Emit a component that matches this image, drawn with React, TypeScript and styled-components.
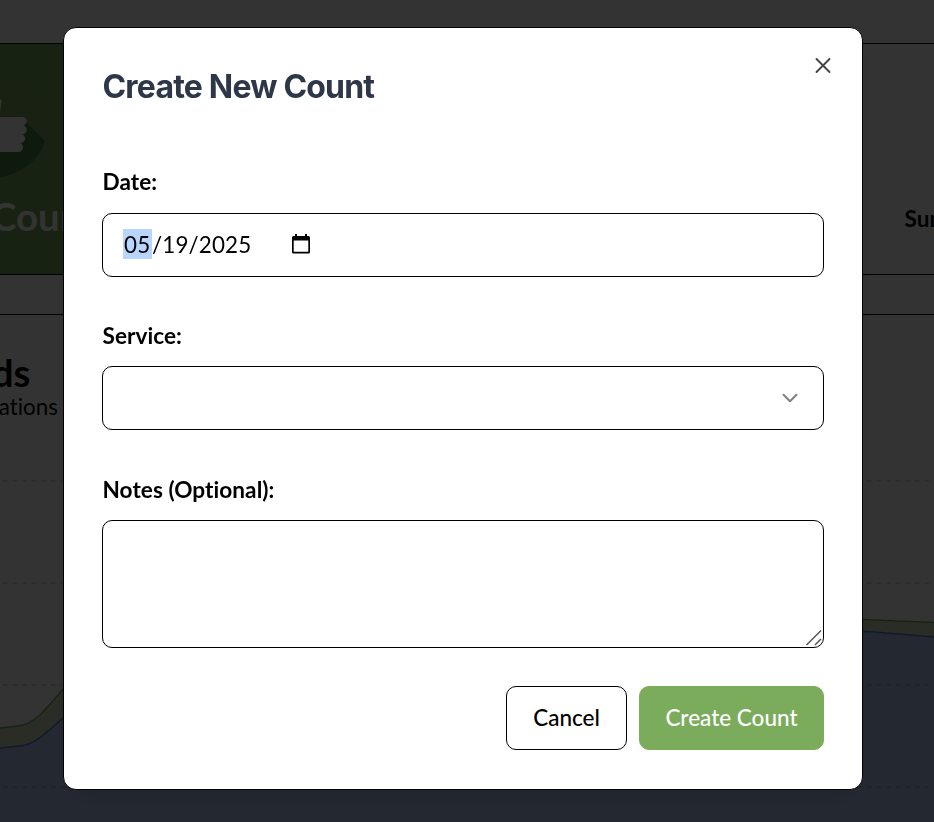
import React from "react";
import styled, { createGlobalStyle } from "styled-components";

const GlobalStyle = createGlobalStyle`
  *, *::before, *::after { box-sizing: border-box; }
  body {
    margin: 0;
    background: #fff;
    color: #000;
    font-family: Lato, sans-serif;
    font-variant-ligatures: none;
    overflow: hidden;
  }
`;

const Page = styled.div`
  display: flex;
  flex-direction: column;
  height: 822px;
  width: 934px;
  overflow: hidden;
`;

const TopBar = styled.div`
  height: 44px;
  border-bottom: 1px solid #000;
`;

const Tabs = styled.div`
  display: flex;
  justify-content: space-between;
  height: 231px;
  border-bottom: 1px solid #000;
`;

const CountTab = styled.div`
  width: 400px;
  background: #7bac5b;
  color: #fff;
  display: flex;
  flex-direction: column;
`;

const TabLogo = styled.svg`
  display: block;
  width: 64px;
  height: 110px;
  margin-top: 28px;
`;

const TabName = styled.div`
  margin: 9px 0 0 -9px;
  font-size: 38.4px;
  font-weight: 700;
  line-height: 50px;
  white-space: nowrap;
`;

const SummaryTab = styled.div`
  width: 29.5px;
  padding-top: 160px;
  font-size: 22.6px;
  font-weight: 700;
  line-height: 30px;
  white-space: nowrap;
`;

const Gap = styled.div`
  height: 40px;
  border-bottom: 1px solid #000;
`;

const TrendHeading = styled.div`
  height: 125px;
  padding-top: 33px;
`;

const ClippedText = styled.div<{ $width: number; $size: number; $line: number; $bold?: boolean }>`
  display: flex;
  justify-content: flex-end;
  width: ${(p) => p.$width}px;
  font-size: ${(p) => p.$size}px;
  font-weight: ${(p) => (p.$bold ? 700 : 400)};
  line-height: ${(p) => p.$line}px;
  white-space: nowrap;
`;

const Chart = styled.svg`
  display: block;
  width: 934px;
  height: 382px;
`;

const Overlay = styled.div`
  position: fixed;
  inset: 0;
  display: flex;
  align-items: flex-start;
  padding: 26.5px 0 0 63px;
  background: rgba(0, 0, 0, 0.8);
`;

const Dialog = styled.div`
  width: 800px;
  height: 763px;
  padding: 24px 38px 38px;
  display: flex;
  flex-direction: column;
  background: #fff;
  border: 1px solid #000;
  border-radius: 13px;
  box-shadow: 0 16px 24px -5px rgba(0, 0, 0, 0.1);
`;

const DialogHeader = styled.div`
  display: flex;
  justify-content: space-between;
  align-items: flex-start;
  height: 119px;
`;

const Title = styled.h2`
  margin: 15px 0 0 0.5px;
  font-family: Inter, sans-serif;
  font-size: 32px;
  font-weight: 700;
  letter-spacing: -0.8px;
  line-height: 40px;
  color: #2d3748;
`;

const CloseButton = styled.button`
  display: flex;
  margin: 1px -12px 0 0;
  padding: 0;
  border: 0;
  background: none;
  color: #444;
`;

const Field = styled.div`
  display: flex;
  flex-direction: column;
  margin-bottom: 47.7px;
`;

const Label = styled.label`
  height: 42px;
  padding: 0.7px 0 0 0.5px;
  font-size: 22.6px;
  font-weight: 700;
  line-height: 22px;
  letter-spacing: 0.05px;
`;

const Control = styled.div<{ $height?: number; $end?: boolean; $corner?: boolean }>`
  display: flex;
  align-items: ${(p) => (p.$corner ? "flex-end" : "center")};
  justify-content: ${(p) => (p.$end || p.$corner ? "flex-end" : "flex-start")};
  height: ${(p) => p.$height ?? 64}px;
  padding: ${(p) => (p.$corner ? "0" : "0 20px")};
  border: 1px solid #000;
  border-radius: 10px;
  font-size: 22.4px;
`;

const DateText = styled.span`
  display: flex;
  line-height: 30px;
  letter-spacing: 0.15px;
`;

const Month = styled.span`
  width: 29px;
  padding-left: 1px;
  background: linear-gradient(#b8d6fb, #b8d6fb) 0 0 / 100% 29px no-repeat;
  box-shadow: 0 -1px 0 #b8d6fb;
`;

const CalendarIcon = styled.svg`
  margin: -2px 0 0 41px;
  width: 18px;
  height: 20px;
`;

const Footer = styled.div`
  display: flex;
  justify-content: flex-end;
  gap: 12px;
  margin-top: -9.7px;
`;

const Button = styled.button<{ $primary?: boolean; $width: number }>`
  width: ${(p) => p.$width}px;
  height: 64px;
  padding: 0;
  border: 1px solid ${(p) => (p.$primary ? "#7bac5b" : "#000")};
  border-radius: 10px;
  background: ${(p) => (p.$primary ? "#7bac5b" : "#fff")};
  color: ${(p) => (p.$primary ? "#fff" : "#000")};
  font-family: Lato, sans-serif;
  font-size: 22.5px;
  font-weight: 500;
`;

const gridLines = [41, 143, 245, 347];

function Backdrop() {
  return (
    <Page>
      <TopBar />
      <Tabs>
        <CountTab>
          <TabLogo viewBox="0 72 64 110">
            <circle cx="-3" cy="126" r="51" fill="#7dab5d" />
            <path d="M26 121.500L45 141Q35 170 0 177.500V150Z" fill="#468438" />
            <path
              d="M0 99Q2 100 1.500 103L-1 117H21A4.200 4.200 0 0 1 23.500 125.500A4.500 4.500 0 0 1 22 134.300A4.300 4.300 0 0 1 19.500 142.700A4.500 4.500 0 0 1 17 152H0Z"
              fill="#fff"
            />
          </TabLogo>
          <TabName>Count</TabName>
        </CountTab>
        <SummaryTab>Summary</SummaryTab>
      </Tabs>
      <Gap />
      <TrendHeading>
        <ClippedText $width={30.500} $size={38.400} $line={48} $bold>Trends</ClippedText>
        <ClippedText $width={58} $size={22.400} $line={22}>locations</ClippedText>
      </TrendHeading>
      <Chart viewBox="0 0 934 382">
        {gridLines.map((y) => (
          <line key={y} x1="3" x2="930" y1={y} y2={y} stroke="#ccc" strokeWidth="1.6" strokeDasharray="4.8 4.8" />
        ))}
        <path
          d="M0 288L18 286C34 285 47 268 63 249C300 40 650 175 863 179.500L934 182.500V197L880 192.500L863 191.500C650 190 300 130 63 278C48 291 35 305 20 306L0 308Z"
          fill="#7bac5b"
          fillOpacity=".4"
        />
        <path
          d="M0 308L20 306C35 305 48 291 63 278C300 130 650 190 863 191.500Q875 191.500 886 193L934 197V382H0Z"
          fill="#6490e6"
          fillOpacity=".48"
        />
        <path
          d="M0 288L18 286C34 285 47 268 63 249C300 40 650 175 863 179.500L934 182.500"
          fill="none"
          stroke="#7bac5b"
          strokeWidth="1.500"
        />
        <path
          d="M0 308L20 306C35 305 48 291 63 278C300 130 650 190 863 191.500Q875 191.500 886 193L934 197"
          fill="none"
          stroke="#5082dc"
          strokeWidth="1.500"
        />
      </Chart>
    </Page>
  );
}

export default function App() {
  return (
    <>
      <GlobalStyle />
      <Backdrop />
      <Overlay>
        <Dialog role="dialog" aria-label="Create New Count">
          <DialogHeader>
            <Title>Create New Count</Title>
            <CloseButton aria-label="Close">
              <svg width="26" height="26" viewBox="0 0 26 26" fill="none" stroke="currentColor" strokeWidth="1.9" strokeLinecap="round">
                <path d="M6.500 6L19.500 19M19.500 6L6.500 19" />
              </svg>
            </CloseButton>
          </DialogHeader>
          <Field>
            <Label>Date:</Label>
            <Control>
              <DateText>
                <Month>05</Month>
                <span>/19/2025</span>
              </DateText>
              <CalendarIcon viewBox="0 0 18 20">
                <path
                  d="M3 0H5V2H13V0H15V2H16.500Q18 2 18 3.500V18Q18 19.500 16.500 19.500H1.500Q0 19.500 0 18V3.500Q0 2 1.500 2H3ZM1.700 6.500V17.800H16.300V6.500Z"
                  fillRule="evenodd"
                />
              </CalendarIcon>
            </Control>
          </Field>
          <Field>
            <Label>Service:</Label>
            <Control $end>
              <svg width="26" height="26" viewBox="0 0 26 26" fill="none" stroke="#808080" strokeWidth="2" strokeLinecap="round" strokeLinejoin="round">
                <path d="M6.500 9.700L13 16.200L19.500 9.700" />
              </svg>
            </Control>
          </Field>
          <Field>
            <Label>Notes (Optional):</Label>
            <Control $height={128} $corner>
              <svg width="18" height="18" viewBox="0 0 18 18" fill="none" stroke="#555" strokeWidth="1.5">
                <path d="M1.500 16L16 1.500M10 16L16 10" />
              </svg>
            </Control>
          </Field>
          <Footer>
            <Button $width={121}>Cancel</Button>
            <Button $width={185} $primary>Create Count</Button>
          </Footer>
        </Dialog>
      </Overlay>
    </>
  );
}
